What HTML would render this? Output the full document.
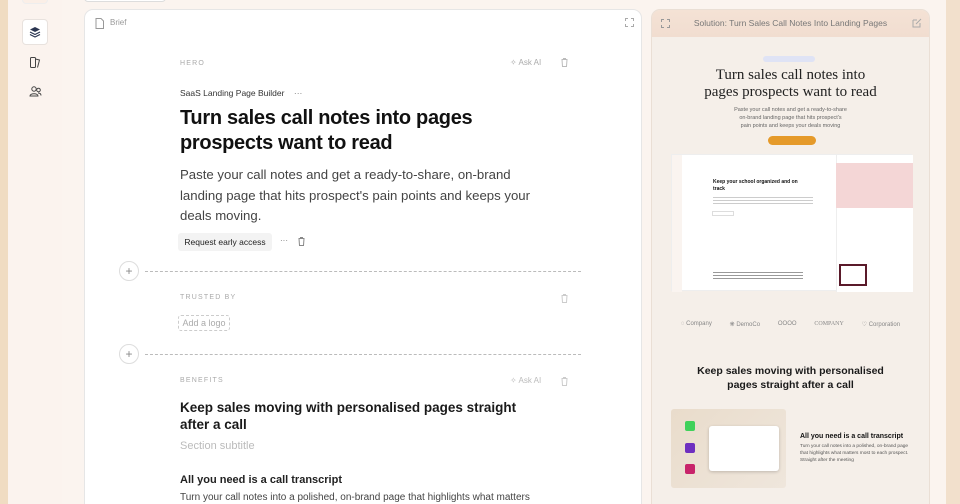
<!DOCTYPE html>
<html><head><meta charset="utf-8"><style>
*{box-sizing:border-box;margin:0;padding:0}
html,body{width:960px;height:504px;overflow:hidden}
body{position:relative;background:#fbf4ef;font-family:"Liberation Sans",sans-serif;color:#111}
.strip{position:absolute;left:0;top:0;width:8px;height:504px;background:#f0dcc2}
.strip2{position:absolute;right:0;top:0;width:14px;height:504px;background:#f2e0cc}
.side{position:absolute;left:8px;top:0;width:54px;height:504px;background:#fbf3ee}
.ib{position:absolute;left:22px;width:26px;height:26px;display:flex;align-items:center;justify-content:center}
.panel{position:absolute;left:84px;top:9px;width:558px;height:510px;background:#fff;border:1px solid #e6e6e6;border-radius:9px;overflow:hidden}
.abs{position:absolute}
.lbl{font-size:7px;letter-spacing:1.2px;color:#aaa}
.dash{position:absolute;border-top:1px dashed #bbb;height:0}
.plus{position:absolute;width:20px;height:20px;border:1px solid #ddd;border-radius:50%;background:#fff;color:#888;font-size:12px;line-height:18px;text-align:center}
.rp{position:absolute;left:651px;top:9px;width:279px;height:510px;background:#f5efe9;border:1px solid #eadfd5;border-radius:9px;overflow:hidden}
.rh{height:27px;background:linear-gradient(#f4e2d5,#f1ddd0);font-size:8.5px;color:#777;text-align:center;line-height:27px}
.serif{font-family:"Liberation Serif",serif}
</style></head><body>
<div class="strip"></div><div class="strip2"></div>
<div class="side"></div>
<div class="abs" style="left:22px;top:-6px;width:26px;height:10px;border:1px solid #eee;border-radius:4px;background:#fbefe7"></div>
<div class="abs" style="left:84px;top:-6px;width:82px;height:8px;border:1px solid #ddd;border-radius:4px;background:#fff"></div>
<div class="ib" style="top:19px;background:#fff;border:1px solid #e8e2de;border-radius:4px"><svg width="12" height="12" viewBox="0 0 12 12"><path d="M6 1L11 3.5 6 6 1 3.5Z" fill="#2a3550"/><path d="M1 6L6 8.5 11 6M1 8.5L6 11 11 8.5" stroke="#2a3550" fill="none" stroke-width="1.2"/></svg></div>
<div class="ib" style="top:49px"><svg width="13" height="13" viewBox="0 0 13 13" fill="none" stroke="#444" stroke-width="1"><rect x="1.5" y="1.5" width="5" height="10" rx="1"/><path d="M6.5 3l4 1-2 7.5"/></svg></div>
<div class="ib" style="top:78px"><svg width="13" height="13" viewBox="0 0 13 13" fill="none" stroke="#444" stroke-width="1"><circle cx="5" cy="4" r="2.2"/><path d="M1 11c0-3 8-3 8 0z"/><circle cx="9.5" cy="5" r="1.8"/><path d="M9 8c2 0 3 1 3 2.5"/></svg></div>

<div class="panel">
<svg class="abs" style="left:10px;top:8px" width="9" height="11" viewBox="0 0 9 11" fill="none" stroke="#999"><path d="M1 .5h5l2.5 2.5v7.5H1z"/></svg>
<div class="abs" style="left:25px;top:8px;font-size:8px;color:#999">Brief</div>
<svg class="abs" style="left:540px;top:8px" width="9" height="9" viewBox="0 0 9 9" fill="none" stroke="#aaa"><path d="M.5 3V.5H3M6 .5h2.5V3M8.5 6v2.5H6M3 8.5H.5V6"/></svg>
<div class="abs lbl" style="left:95px;top:50px">HERO</div>
<div class="abs" style="left:425px;top:48px;font-size:8px;color:#aaa">✧ Ask AI</div>
<svg class="abs" style="left:476px;top:48px" width="7" height="9" viewBox="0 0 7 9" fill="none" stroke="#bbb"><path d="M.5 1.5h6M2.5 1.5V.5h2v1M1 1.5l.5 7h4l.5-7"/></svg>
<div class="abs" style="left:95px;top:78px;font-size:8.5px;color:#333">SaaS Landing Page Builder &nbsp;&nbsp;&nbsp;<span style="color:#777">···</span></div>
<div class="abs" style="left:95px;top:96px;font-size:20px;font-weight:bold;line-height:25px;letter-spacing:-0.3px">Turn sales call notes into pages<br>prospects want to read</div>
<div class="abs" style="left:95px;top:155px;font-size:13.2px;color:#444;line-height:20.5px">Paste your call notes and get a ready-to-share, on-brand<br>landing page that hits prospect's pain points and keeps your<br>deals moving.</div>
<div class="abs" style="left:93px;top:223px;width:94px;height:18px;background:#f3f3f3;border-radius:3px;font-size:8.5px;line-height:18px;text-align:center;color:#222">Request early access</div>
<div class="abs" style="left:195px;top:226px;font-size:8px;color:#777">···</div>
<svg class="abs" style="left:213px;top:227px" width="7" height="9" viewBox="0 0 7 9" fill="none" stroke="#888"><path d="M.5 1.5h6M2.5 1.5V.5h2v1M1 1.5l.5 7h4l.5-7"/></svg>
<div class="plus" style="left:34px;top:251px">+</div>
<div class="dash" style="left:60px;top:261px;width:436px"></div>
<div class="abs lbl" style="left:95px;top:284px">TRUSTED BY</div>
<svg class="abs" style="left:476px;top:284px" width="7" height="9" viewBox="0 0 7 9" fill="none" stroke="#ccc"><path d="M.5 1.5h6M2.5 1.5V.5h2v1M1 1.5l.5 7h4l.5-7"/></svg>
<div class="abs" style="left:93px;top:305px;width:52px;height:16px;border:1px dashed #ccc;border-radius:3px;font-size:9px;line-height:14px;text-align:center;color:#aaa">Add a logo</div>
<div class="plus" style="left:34px;top:334px">+</div>
<div class="dash" style="left:60px;top:344px;width:436px"></div>
<div class="abs lbl" style="left:95px;top:367px">BENEFITS</div>
<div class="abs" style="left:425px;top:366px;font-size:8px;color:#bbb">✧ Ask AI</div>
<svg class="abs" style="left:476px;top:367px" width="7" height="9" viewBox="0 0 7 9" fill="none" stroke="#ccc"><path d="M.5 1.5h6M2.5 1.5V.5h2v1M1 1.5l.5 7h4l.5-7"/></svg>
<div class="abs" style="left:95px;top:390px;font-size:13.5px;font-weight:bold;line-height:16.5px;color:#1a1a1a">Keep sales moving with personalised pages straight<br>after a call</div>
<div class="abs" style="left:95px;top:430px;font-size:11px;color:#bbb">Section subtitle</div>
<div class="abs" style="left:95px;top:464px;font-size:11px;font-weight:bold;color:#222">All you need is a call transcript</div>
<div class="abs" style="left:95px;top:482px;font-size:10px;color:#444">Turn your call notes into a polished, on-brand page that highlights what matters</div>
</div>

<div class="rp">
<div class="rh">Solution: Turn Sales Call Notes Into Landing Pages</div>
<svg class="abs" style="left:9px;top:9px" width="9" height="9" viewBox="0 0 9 9" fill="none" stroke="#999"><path d="M.5 3V.5H3M6 .5h2.5V3M8.5 6v2.5H6M3 8.5H.5V6"/></svg>
<svg class="abs" style="left:260px;top:8px" width="10" height="10" viewBox="0 0 10 10" fill="none" stroke="#aaa"><path d="M1 2h4M1 2v7h7V5M4 6l5-5"/></svg>
<div class="abs" style="left:111px;top:46px;width:52px;height:6px;background:#dfe3f5;border-radius:3px"></div>
<div class="abs serif" style="left:0;width:277px;top:57px;text-align:center;font-size:15px;line-height:17px;color:#222">Turn sales call notes into<br>pages prospects want to read</div>
<div class="abs" style="left:0;width:277px;top:96px;text-align:center;font-size:5.5px;line-height:8px;color:#666">Paste your call notes and get a ready-to-share<br>on-brand landing page that hits prospect's<br>pain points and keeps your deals moving</div>
<div class="abs" style="left:116px;top:126px;width:48px;height:9px;background:#e59a2a;border-radius:5px"></div>
<div class="abs" style="left:19px;top:144px;width:241px;height:137px;background:#fff;border:1px solid #eee">
 <div class="abs" style="left:0;top:0;width:10px;height:137px;background:#faf4f0"></div>
 <div class="abs" style="left:41px;top:24px;font-size:5px;font-weight:bold;line-height:7px">Keep your school organized and on<br>track</div>
 <div class="abs" style="left:41px;top:41px;width:100px;height:10px;background:repeating-linear-gradient(#fff 0 1px,#ccc 1px 2px,#fff 2px 3px)"></div>
 <div class="abs" style="left:40px;top:56px;width:22px;height:5px;border:1px solid #ddd"></div>
 <div class="abs" style="left:41px;top:116px;width:90px;height:8px;background:repeating-linear-gradient(#fff 0 1px,#999 1px 2px,#fff 2px 3px)"></div>
 <div class="abs" style="left:164px;top:0;width:77px;height:137px;border-left:1px solid #eee;background:#fff"></div>
 <div class="abs" style="left:164px;top:8px;width:77px;height:45px;background:#f4d6d6"></div>
 <div class="abs" style="left:167px;top:109px;width:28px;height:22px;border:2px solid #5a1a2a"></div>
</div>
<div class="abs" style="left:0;width:277px;top:311px;font-size:6px;color:#888;display:flex;justify-content:space-around;padding:0 20px"><span>◌ Company</span><span>❋ DemoCo</span><span>OOOO</span><span class="serif">COMPANY</span><span>♡ Corporation</span></div>
<div class="abs" style="left:0;width:277px;top:354px;text-align:center;font-size:10.5px;font-weight:bold;line-height:14px;color:#1a1a1a">Keep sales moving with personalised<br>pages straight after a call</div>
<div class="abs" style="left:19px;top:399px;width:115px;height:79px;background:linear-gradient(135deg,#e9dccb,#efe6dc);border-radius:3px">
 <div class="abs" style="left:14px;top:12px;width:10px;height:10px;background:#3fd15a;border-radius:2px"></div>
 <div class="abs" style="left:14px;top:34px;width:10px;height:10px;background:#6e2fc0;border-radius:2px"></div>
 <div class="abs" style="left:14px;top:55px;width:10px;height:10px;background:#c8246a;border-radius:2px"></div>
 <div class="abs" style="left:38px;top:17px;width:70px;height:45px;background:#fff;border-radius:3px;box-shadow:0 1px 3px rgba(0,0,0,.2)"></div>
</div>
<div class="abs" style="left:148px;top:423px;font-size:7px;font-weight:bold">All you need is a call transcript</div>
<div class="abs" style="left:148px;top:433px;font-size:4.8px;line-height:7px;color:#555">Turn your call notes into a polished, on-brand page<br>that highlights what matters most to each prospect.<br>Straight after the meeting</div>
</div>
</body></html>
